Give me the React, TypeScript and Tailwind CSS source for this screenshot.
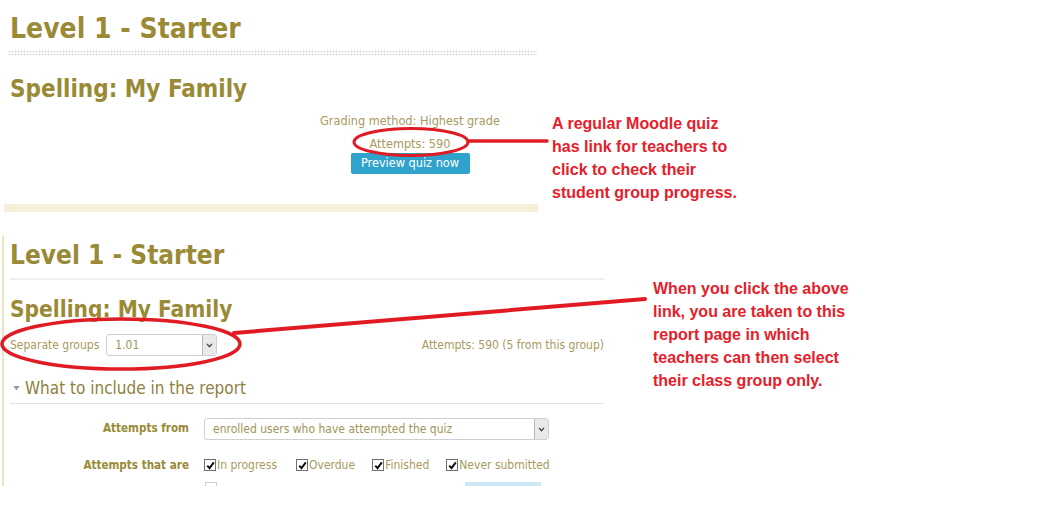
import React from "react";

const ui = "font-['DejaVu_Sans_Condensed','DejaVu_Sans',sans-serif]";
const note = "font-['Liberation_Sans',Arial,sans-serif] font-bold text-[16px] leading-[23px] text-[#e5202a]";

function Check({label}: {label: string}) {
    return (
        <span className="flex items-center">
            <span className="flex h-[12px] w-[12px] items-center justify-center border border-[#6f6f6f] bg-white">
                <svg viewBox="0 0 10 10" className="h-[9px] w-[9px]">
                    <path d="M1.4 5.2 L3.9 7.9 L8.7 1.6" stroke="#111" strokeWidth="2.2" fill="none" />
                </svg>
            </span>
            <span className="ml-[1px]">{label}</span>
        </span>
    );
}

function SelectBox({value, width}: {value: string; width: string}) {
    return (
        <div className={`flex h-[22px] items-stretch rounded-[3px] border border-[#cfcfcf] bg-white ${width}`}>
            <span className="flex flex-1 items-center pl-[8px] text-[#a39458]">{value}</span>
            <span className="flex w-[14px] items-center justify-center border-l border-[#b9b9b9] bg-[#e9e9e9]">
                <svg viewBox="0 0 8 6" className="h-[5px] w-[7px]">
                    <path d="M1 1 L4 4.5 L7 1" stroke="#444" strokeWidth="1.6" fill="none" />
                </svg>
            </span>
        </div>
    );
}

export default function App() {
    return (
        <div className={`relative h-[526px] w-[1038px] overflow-hidden bg-white ${ui}`}>
            {/* First screenshot: quiz page */}
            <div className="ml-[4px] h-[212px] w-[534px] pt-[15px]">
                <h1 className="ml-[6px] text-[28px] font-bold leading-[28px] text-[#9a8a36]">
                    Level 1 - Starter
                </h1>
                <div className="mt-[7px] ml-[4px] mr-[1px] h-[6px] bg-[radial-gradient(circle,#dddddd_45%,transparent_50%)] bg-[length:3px_3px]" />
                <h2 className="mt-[21px] ml-[6px] text-[24px] font-bold leading-[24px] text-[#9a8a36]">
                    Spelling: My Family
                </h2>
                <div className="mt-[11px] ml-[306px] flex w-[200px] flex-col items-center text-[12.6px] text-[#a89a5e]">
                    <p className="leading-[18px]">Grading method: Highest grade</p>
                    <p className="mt-[5px] leading-[18px]">Attempts: 590</p>
                    <button className="h-[21px] w-[119px] rounded-[2px] bg-[#2fa3cc] text-[12.6px] text-white">
                        Preview quiz now
                    </button>
                </div>
                <div className="mt-[30px] h-[8px] bg-[#f5f0da]" />
            </div>

            {/* Second screenshot: report page */}
            <div className="mt-[24px] ml-[2px] h-[250px] w-[606px] overflow-hidden border-l-2 border-[#ece3bf] pl-[6px] pr-[4px] pt-[6px]">
                <h1 className="text-[26px] font-bold leading-[26px] text-[#9a8a36]">Level 1 - Starter</h1>
                <div className="mt-[10px] border-t-2 border-[#efefef]" />
                <h2 className="mt-[18px] text-[22.5px] font-bold leading-[23px] text-[#9a8a36]">
                    Spelling: My Family
                </h2>
                <div className="mt-[13px] flex items-center justify-between text-[12px] text-[#a89a5e]">
                    <div className="flex items-center gap-[7px]">
                        <span>Separate groups</span>
                        <SelectBox value="1.01" width="w-[111px]" />
                    </div>
                    <span>Attempts: 590 (5 from this group)</span>
                </div>
                <div className="mt-[22px] flex items-center border-b border-[#e3e3e3] pb-[5px] text-[17px] leading-[20px] text-[#8f8040]">
                    <svg viewBox="0 0 8 6" className="mx-[3px] h-[5px] w-[7px]">
                        <path d="M0 0 L8 0 L4 5 Z" fill="#9a9a9a" />
                    </svg>
                    <span className="ml-[2px]">What to include in the report</span>
                </div>
                <div className="mt-[14px] flex items-center">
                    <span className="w-[179px] text-right text-[11.6px] font-bold text-[#9a8a36]">Attempts from</span>
                    <div className="ml-[15px] text-[12px]">
                        <SelectBox value="enrolled users who have attempted the quiz" width="w-[345px]" />
                    </div>
                </div>
                <div className="mt-[17px] flex items-center leading-[16px]">
                    <span className="w-[179px] text-right text-[11.6px] font-bold text-[#9a8a36]">Attempts that are</span>
                    <div className="ml-[15px] flex items-center text-[12px] text-[#a89a5e]">
                        <Check label="In progress" />
                        <span className="ml-[19px]"><Check label="Overdue" /></span>
                        <span className="ml-[17px]"><Check label="Finished" /></span>
                        <span className="ml-[17px]"><Check label="Never submitted" /></span>
                    </div>
                </div>
                <div className="mt-[9px] flex items-start">
                    <span className="ml-[195px] h-[12px] w-[12px] border border-[#cfcfcf]" />
                    <span className="ml-[248px] h-[12px] w-[76px] bg-[#cde9f5]" />
                </div>
            </div>

            {/* Annotations */}
            <svg className="pointer-events-none absolute left-0 top-0" width="1038" height="526">
                <ellipse cx="411" cy="142" rx="57" ry="13.5" fill="none" stroke="#e01b24" strokeWidth="3" />
                <line x1="468" y1="141" x2="547" y2="141" stroke="#e01b24" strokeWidth="3.5" strokeLinecap="round" />
                <ellipse cx="121" cy="344" rx="119" ry="25" fill="none" stroke="#e01b24" strokeWidth="3.5" />
                <line x1="234" y1="333" x2="645" y2="299" stroke="#e01b24" strokeWidth="4" strokeLinecap="round" />
            </svg>
            <p className={`absolute left-[552px] top-[112px] ${note}`}>
                A regular Moodle quiz
                <br />
                has link for teachers to
                <br />
                click to check their
                <br />
                student group progress.
            </p>
            <p className={`absolute left-[653px] top-[277px] ${note}`}>
                When you click the above
                <br />
                link, you are taken to this
                <br />
                report page in which
                <br />
                teachers can then select
                <br />
                their class group only.
            </p>
        </div>
    );
}
